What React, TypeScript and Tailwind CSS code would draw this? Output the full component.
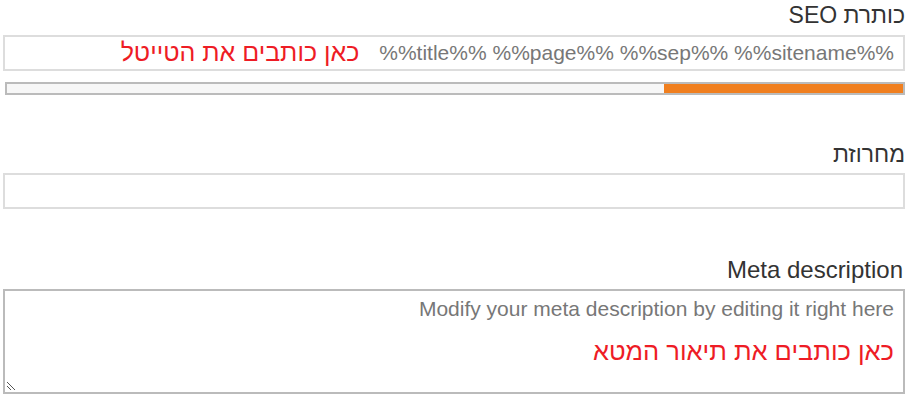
import React from 'react';

const Field: React.FC<{ label: string; labelClass?: string; className?: string; children: React.ReactNode }> = ({
  label,
  labelClass = 'text-[23px]',
  className,
  children,
}) => (
  <div className={className}>
    <div className={`h-[30px] leading-[30px] text-[#333] text-right ${labelClass}`}>{label}</div>
    {children}
  </div>
);

const App: React.FC = () => {
  return (
    <div
      dir="rtl"
      className="w-[912px] h-[404px] bg-white pl-[3px] pr-[7px] overflow-hidden"
      style={{ fontFamily: '"Liberation Sans", Arial, sans-serif' }}
    >
      {/* SEO title */}
      <Field label="כותרת SEO">
        <div className="mt-[5px] h-[36px] border-2 border-[#ddd] flex items-center gap-[20px] pr-[9px] whitespace-nowrap">
          <span dir="ltr" className="text-[21px] text-[#777]">%%title%% %%page%% %%sep%% %%sitename%%</span>
          <span className="text-[25px] text-[#ee1c25]">כאן כותבים את הטייטל</span>
        </div>
        <div className="mt-[11px] ml-[2px] h-[13px] border-2 border-[#bbb] bg-[#f7f7f7] flex">
          <div className="w-[239px] h-full bg-[#f07f1f]" />
        </div>
      </Field>

      {/* Keyphrase */}
      <Field label="מחרוזת" className="mt-[44px]">
        <div className="mt-[4px] h-[36px] border-2 border-[#ddd]" />
      </Field>

      {/* Meta description */}
      <Field label="Meta description" labelClass="text-[24px] pr-[2px]" className="mt-[46px]">
        <div className="relative mt-[4px] h-[105px] border-2 border-[#bbb] pr-[9px] pt-[5px] text-right">
          <div className="text-[21px] leading-[26px] text-[#777]">Modify your meta description by editing it right here</div>
          <div className="mt-[13px] text-[25.5px] leading-[32px] text-[#ee1c25]">כאן כותבים את תיאור המטא</div>
          <svg className="absolute left-[1px] bottom-[1px]" width="10" height="10" viewBox="0 0 10 10">
            <path d="M1 1 L9 9 M1 5 L5 9" stroke="#555" strokeWidth="1" />
          </svg>
        </div>
      </Field>
    </div>
  );
};

export default App;
